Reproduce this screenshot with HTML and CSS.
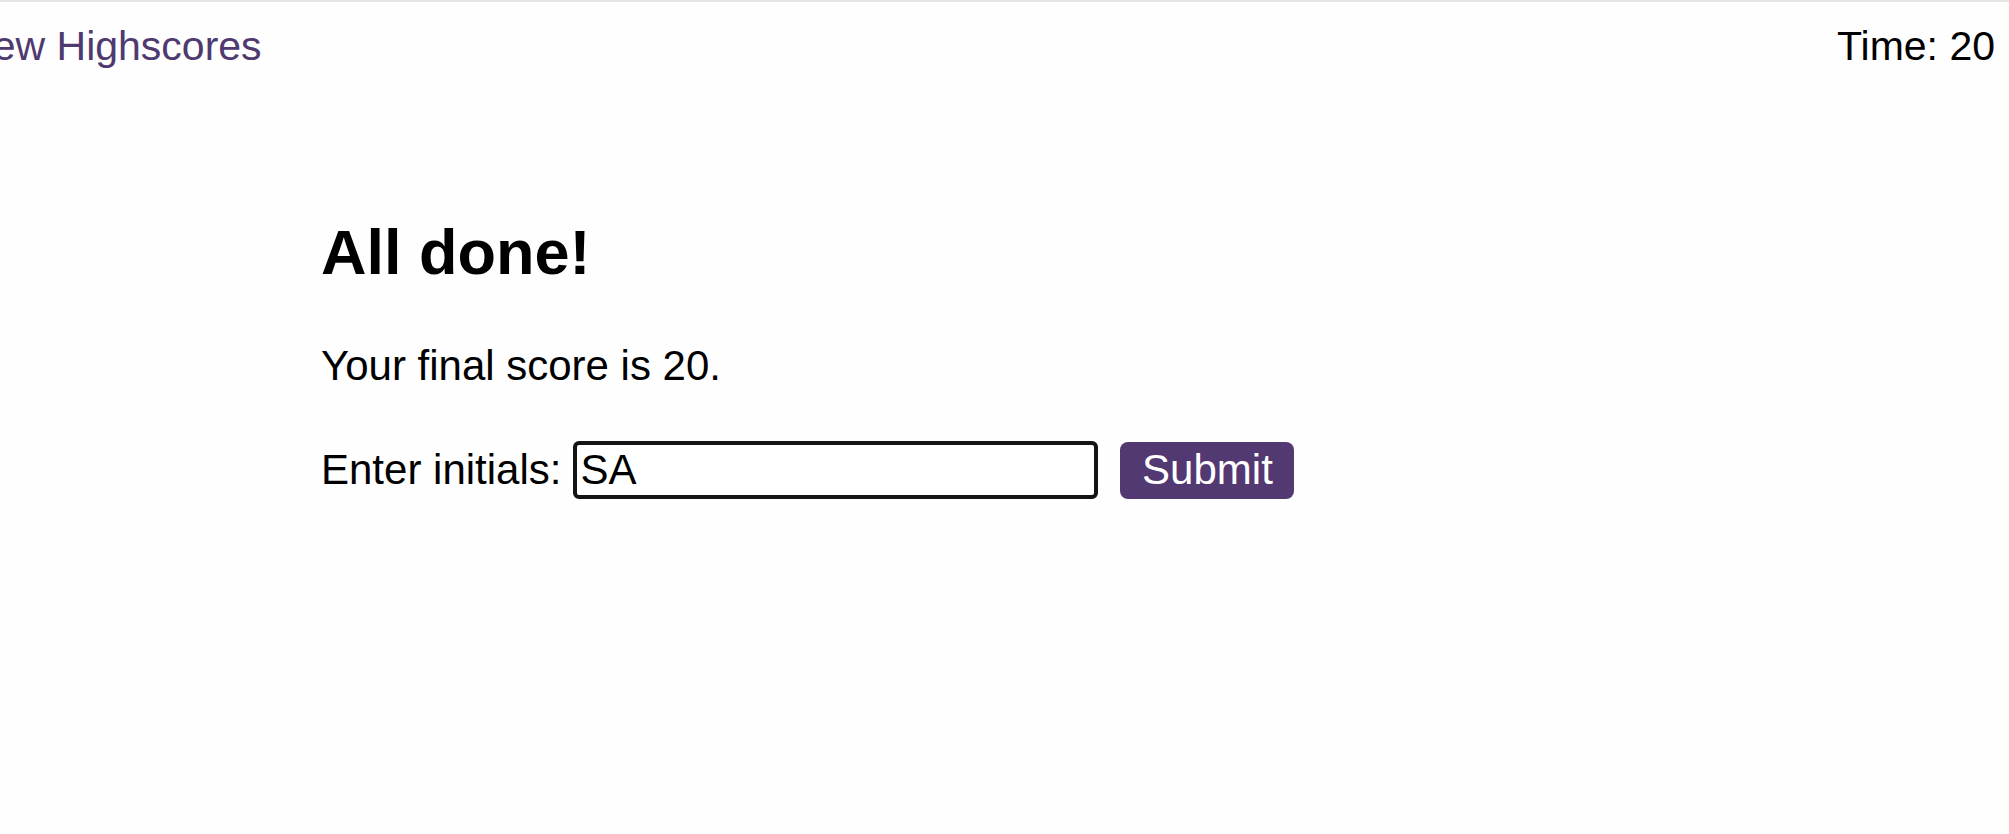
FILE: index.html
```html
<!DOCTYPE html>
<html lang="en">
<head>
<meta charset="utf-8">
<title>Code Quiz</title>
<link rel="stylesheet" href="styles.css">
</head>
<body>
<div class="topline"></div>
<header class="header">
  <a class="nav-link" href="#">View Highscores</a>
  <div class="timer">Time: 20</div>
</header>
<main class="main">
  <h1 class="title">All done!</h1>
  <p class="score">Your final score is 20.</p>
  <form class="form-row">
    <label class="label" for="initials">Enter initials:</label>
    <input class="initials" id="initials" type="text" value="SA" autofocus>
    <button class="submit" type="button">Submit</button>
  </form>
</main>
</body>
</html>
```
FILE: styles.css
```css
html, body {
  margin: 0;
  padding: 0;
  background: #fefefe;
}
body {
  font-family: "Liberation Sans", Arial, sans-serif;
  color: #000;
  overflow: hidden;
}
.topline {
  height: 2px;
  background: #e4e4e4;
}
.header {
  display: flex;
  justify-content: space-between;
  align-items: flex-start;
  padding: 21px 14px 0 0;
  font-size: 41px;
  line-height: 47px;
}
.nav-link {
  margin-left: -43px;
  color: #4f3a70;
  text-decoration: none;
}
.timer {
  color: #000;
}
.main {
  padding-left: 321px;
  margin-top: 145px;
}
.title {
  margin: 0;
  font-size: 63px;
  line-height: 74px;
  font-weight: bold;
}
.score {
  margin: 54px 0 0;
  font-size: 42px;
  line-height: 46px;
}
.form-row {
  margin-top: 52px;
  display: flex;
  align-items: center;
  font-size: 42px;
  line-height: 46px;
}
.label {
  margin-right: 12px;
}
.initials {
  box-sizing: border-box;
  width: 525px;
  height: 58px;
  border: 4px solid #141414;
  border-radius: 6px;
  padding: 0 3px;
  font-family: "Liberation Sans", Arial, sans-serif;
  font-size: 42px;
  color: #000;
  background: #fff;
  outline: none;
  caret-color: #000;
}
.submit {
  box-sizing: border-box;
  margin-left: 22px;
  width: 174px;
  height: 57px;
  border: none;
  border-radius: 8px;
  background: #523972;
  color: #fff;
  font-family: "Liberation Sans", Arial, sans-serif;
  font-size: 42px;
  padding: 0;
  cursor: pointer;
}
```
